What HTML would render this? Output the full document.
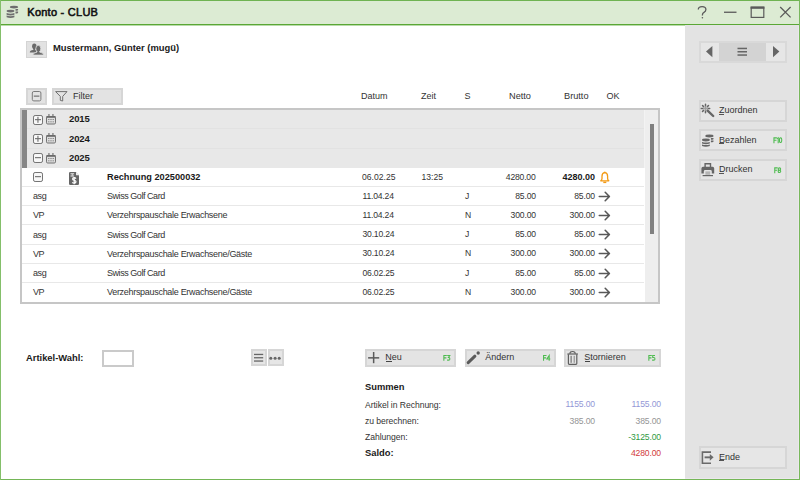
<!DOCTYPE html>
<html><head><meta charset="utf-8"><style>
html,body{margin:0;padding:0;}
body{width:800px;height:480px;position:relative;overflow:hidden;background:#fff;font-family:"Liberation Sans",sans-serif;}
.t{position:absolute;white-space:nowrap;line-height:normal;}
.r{position:absolute;}
svg.r{overflow:visible;}
</style></head><body>
<div class="r" style="left:0px;top:0px;width:800px;height:24px;background:#dcebd3;"></div>
<div class="r" style="left:0px;top:24px;width:800px;height:1px;background:#5aa735;"></div>
<div class="r" style="left:0px;top:25px;width:800px;height:1px;background:#b9dbaa;"></div>
<div class="r" style="left:0px;top:0px;width:800px;height:1px;background:#6fb352;"></div>
<div class="r" style="left:0px;top:479px;width:800px;height:1px;background:#74b657;"></div>
<div class="r" style="left:0px;top:0px;width:1px;height:480px;background:#84bf6a;"></div>
<div class="r" style="left:799px;top:0px;width:1px;height:480px;background:#78b85c;"></div>
<svg class="r" style="left:0px;top:0px" width="24" height="24" viewBox="0 0 24 24"><g fill="#6e6e6e">
<ellipse cx="14.0" cy="7.1" rx="4.1" ry="1.45"/>
<path d="M15.5 9.0 h2.6 v1.3 q-1 .5 -2.6 .5z"/>
<path d="M15.5 11.6 h2.6 v1.3 q-1 .5 -2.6 .5z"/>
<ellipse cx="10.5" cy="11.1" rx="3.95" ry="1.4"/>
<path d="M6.6 13.0 q3.9 1.3 7.8 0 v1.7 q-3.9 1.4 -7.8 0z"/>
<path d="M6.6 15.5 q3.9 1.3 7.8 0 v1.7 q-3.9 1.4 -7.8 0z"/>
</g></svg>
<div class="t" style="left:27.3px;top:6.15px;font-size:11px;font-weight:normal;color:#111;letter-spacing:0.25px;-webkit-text-stroke:0.55px #111;">Konto - CLUB</div>
<svg class="r" style="left:690px;top:0px" width="110" height="24" viewBox="0 0 110 24">
<path d="M698.3 9.6 q0 -3 3.8 -3 q3.8 0 3.8 3 q0 1.8 -1.9 2.7 q-1.6 .8 -1.6 2.6 v.6" transform="translate(-690 0)" fill="none" stroke="#5a5a5a" stroke-width="1.3"/>
<circle cx="12.4" cy="17.8" r=".8" fill="#5a5a5a"/>
<rect x="34" y="11.6" width="12.5" height="1.3" fill="#5a5a5a"/>
<rect x="61.2" y="7.2" width="12.6" height="10.2" fill="none" stroke="#5a5a5a" stroke-width="1.2"/>
<rect x="60.6" y="6.6" width="13.8" height="2.2" fill="#5a5a5a"/>
<path d="M90.2 7 L100.6 17.4 M100.6 7 L90.2 17.4" stroke="#5a5a5a" stroke-width="1.3"/>
</svg>
<div class="r" style="left:685px;top:25px;width:114px;height:454px;background:#e3e3e3;"></div>
<div class="r" style="left:798px;top:26px;width:1px;height:453px;background:#ebe8ec;"></div>
<div class="r" style="left:685px;top:478px;width:114px;height:1px;background:#ebe8ec;"></div>
<div class="r" style="left:699px;top:41px;width:88px;height:22px;background:#d9d9d9;"></div>
<div class="r" style="left:701px;top:43px;width:18px;height:18px;background:#e6e6e6;"></div>
<div class="r" style="left:719px;top:43px;width:47px;height:18px;background:#d3d3d3;"></div>
<div class="r" style="left:766px;top:43px;width:19px;height:18px;background:#e6e6e6;"></div>
<svg class="r" style="left:690px;top:30px" width="110" height="40" viewBox="0 0 110 40"><g fill="#666">
<path d="M22.4 16 L16 21.6 L22.4 27.2z"/>
<path d="M83 16 L89.4 21.6 L83 27.2z"/>
<rect x="47.5" y="17.7" width="9.5" height="1.5"/>
<rect x="47.5" y="21" width="9.5" height="1.5"/>
<rect x="47.5" y="24.3" width="9.5" height="1.5"/>
</g></svg>
<div class="r" style="left:699px;top:100px;width:88px;height:22px;background:#e6e6e6;border:2px solid #d6d6d6;box-sizing:border-box;"></div>
<div class="t" style="left:719px;top:105.16px;font-size:9px;font-weight:normal;color:#333;">Zuordnen</div>
<div class="r" style="left:719px;top:114px;width:5px;height:1px;background:#555;"></div>
<svg class="r" style="left:699px;top:100px" width="22" height="22" viewBox="0 0 22 22"><g stroke="#666" stroke-linecap="round">
<path d="M8.6 10.6 L14.2 16" stroke-width="2.4"/>
<path d="M6.5 4.3 v1.6 M6.5 11.1 v1.6 M2.3 8.5 h1.6 M9.1 8.5 h1.6 M3.5 5.5 l1.1 1.1 M3.5 11.5 l1.1 -1.1 M9.5 5.5 l-1.1 1.1" stroke-width="1.5"/>
</g><circle cx="6.5" cy="8.5" r="1.4" fill="#999"/></svg>
<div class="r" style="left:699px;top:129px;width:88px;height:22px;background:#e6e6e6;border:2px solid #d6d6d6;box-sizing:border-box;"></div>
<div class="t" style="left:719px;top:135.05px;font-size:9px;font-weight:normal;color:#333;">Bezahlen</div>
<div class="r" style="left:719px;top:143px;width:5px;height:1px;background:#555;"></div>
<svg class="r" style="left:0;top:0" width="1" height="1"><g fill="none" stroke="#4dbb4f" stroke-width="1.05"><path transform="translate(773.30 137.2)" d="M0.65 6 V0.65 H3.6 M0.65 3.1 H3.2"/><path transform="translate(776.90 137.2)" d="M0.2 1.5 L1.3 0.65 V6"/><path transform="translate(778.90 137.2)" d="M1.7 0.65 q1.1 0 1.1 1.5 v1.7 q0 1.5 -1.1 1.5 q-1.1 0 -1.1 -1.5 v-1.7 q0 -1.5 1.1 -1.5z"/></g></svg>
<svg class="r" style="left:699px;top:129px" width="22" height="22" viewBox="0 0 22 22"><g fill="#666">
<ellipse cx="10.4" cy="7.0" rx="4.1" ry="1.45"/>
<path d="M11.9 8.9 h2.6 v1.3 q-1 .5 -2.6 .5z"/>
<path d="M11.9 11.5 h2.6 v1.3 q-1 .5 -2.6 .5z"/>
<ellipse cx="6.9" cy="11.0" rx="3.95" ry="1.4"/>
<path d="M3 12.9 q3.9 1.3 7.8 0 v1.7 q-3.9 1.4 -7.8 0z"/>
<path d="M3 15.399999999999999 q3.9 1.3 7.8 0 v1.7 q-3.9 1.4 -7.8 0z"/>
</g></svg>
<div class="r" style="left:699px;top:159px;width:88px;height:22px;background:#e6e6e6;border:2px solid #d6d6d6;box-sizing:border-box;"></div>
<div class="t" style="left:719px;top:164.05px;font-size:9px;font-weight:normal;color:#333;">Drucken</div>
<div class="r" style="left:719px;top:173px;width:5px;height:1px;background:#555;"></div>
<svg class="r" style="left:0;top:0" width="1" height="1"><g fill="none" stroke="#4dbb4f" stroke-width="1.05"><path transform="translate(774.10 167.2)" d="M0.65 6 V0.65 H3.6 M0.65 3.1 H3.2"/><path transform="translate(777.70 167.2)" d="M1.75 0.65 q1.2 0 1.2 1.15 q0 1.15 -1.2 1.15 q-1.2 0 -1.2 -1.15 q0 -1.15 1.2 -1.15z M1.75 2.95 q1.3 0 1.3 1.2 q0 1.2 -1.3 1.2 q-1.3 0 -1.3 -1.2 q0 -1.2 1.3 -1.2z"/></g></svg>
<svg class="r" style="left:699px;top:159px" width="22" height="22" viewBox="0 0 22 22"><g transform="translate(0 -0.8)"><g fill="#666">
<path d="M5.4 4.8 h6.8 v4 h-1.4 v-2.6 h-4 v2.6 h-1.4z"/>
<path d="M4 8.6 h9.6 q1.6 0 1.6 1.6 v5.2 h-2.4 v-2.2 q0 -1.4 -1.4 -1.4 h-5.2 q-1.4 0 -1.4 1.4 v2.2 h-2.4 v-5.2 q0 -1.6 1.6 -1.6z"/>
<rect x="3.6" y="16.8" width="10.4" height="1.2"/>
</g><rect x="6.4" y="13.2" width="4.8" height="3.4" fill="#b5b5b5"/></g></svg>
<div class="r" style="left:699px;top:446px;width:88px;height:23px;background:#e6e6e6;border:2px solid #d6d6d6;box-sizing:border-box;"></div>
<div class="t" style="left:719px;top:451.96px;font-size:9px;font-weight:normal;color:#333;">Ende</div>
<div class="r" style="left:719px;top:460px;width:5px;height:1px;background:#555;"></div>
<svg class="r" style="left:699px;top:446px" width="22" height="22" viewBox="0 0 22 22"><g fill="#6a6a6a">
<path d="M2.6 5.3 h9.4 v1.6 h-7.8 v9.6 h7.8 v1.6 h-9.4z"/>
<rect x="5.6" y="10.4" width="5.5" height="1.9"/>
<path d="M10.8 8 L14.6 11.35 L10.8 14.7z"/>
</g></svg>
<div class="r" style="left:26px;top:41px;width:21px;height:17px;background:#e2e2e2;border:1.5px solid #d4d4d4;box-sizing:border-box;"></div>
<svg class="r" style="left:26px;top:41px" width="21" height="17" viewBox="0 0 21 17"><g fill="#6a6a6a">
<ellipse cx="8.3" cy="5.3" rx="2.2" ry="2.8"/>
<rect x="7.3" y="7" width="2" height="2.5"/>
<path d="M3.8 11.4 q0 -2.2 3.2 -2.4 h3.2 v2.4z"/>
</g>
<g fill="#6a6a6a" stroke="#e2e2e2" stroke-width="0.8">
<path d="M12.3 4.3 q-2.5 0 -2.5 3.4 q0 2 1.3 3 l-.1 .4 q-3.8 .5 -4.2 3 h11 q-.4 -2.5 -4.2 -3 l-.1 -.4 q1.3 -1 1.3 -3 q0 -3.4 -2.5 -3.4z"/>
</g></svg>
<div class="t" style="left:53px;top:42.49px;font-size:9.4px;font-weight:bold;color:#1a1a1a;">Mustermann, Günter (mugü)</div>
<div class="r" style="left:26px;top:88px;width:21px;height:17px;background:#e3e3e3;border:2px solid #d6d6d6;box-sizing:border-box;"></div>
<svg class="r" style="left:26px;top:88px" width="21" height="17" viewBox="0 0 21 17"><rect x="6.3" y="3.5" width="8.6" height="9.4" rx="1.5" fill="none" stroke="#7a7a7a" stroke-width="1"/><rect x="7.8" y="7.5" width="5.6" height="1.3" fill="#7a7a7a"/></svg>
<div class="r" style="left:52px;top:88px;width:71px;height:17px;background:#e3e3e3;border:2px solid #d6d6d6;box-sizing:border-box;"></div>
<svg class="r" style="left:52px;top:88px" width="20" height="17" viewBox="0 0 20 17"><path d="M3.6 3.6 h11.4 l-4.3 4.8 v4.6 l-2.4 -.6 v-4z" fill="none" stroke="#707070" stroke-width="1" stroke-linejoin="round"/></svg>
<div class="t" style="left:73px;top:90.56px;font-size:9px;font-weight:normal;color:#333;">Filter</div>
<div class="t" style="left:361px;top:91.16px;font-size:9px;font-weight:normal;color:#333;">Datum</div>
<div class="t" style="left:421px;top:91.16px;font-size:9px;font-weight:normal;color:#333;">Zeit</div>
<div class="t" style="left:464.5px;top:91.16px;font-size:9px;font-weight:normal;color:#333;">S</div>
<div class="t" style="left:509px;top:90.97px;font-size:9.2px;font-weight:normal;color:#333;">Netto</div>
<div class="t" style="left:564px;top:90.97px;font-size:9.2px;font-weight:normal;color:#333;">Brutto</div>
<div class="t" style="left:606.5px;top:91.16px;font-size:9px;font-weight:normal;color:#333;">OK</div>
<div class="r" style="left:20px;top:108px;width:640px;height:196px;background:#c6c6c6;"></div>
<div class="r" style="left:22px;top:110px;width:636px;height:192px;background:#ffffff;"></div>
<div class="r" style="left:22px;top:110px;width:622px;height:58px;background:#e8e8e8;"></div>
<div class="r" style="left:644px;top:110px;width:1px;height:58px;background:#f3f3f3;"></div>
<div class="r" style="left:645px;top:110px;width:13px;height:192px;background:#eeeeee;"></div>
<div class="r" style="left:650px;top:124px;width:4px;height:110px;background:#808080;"></div>
<div class="r" style="left:22px;top:110px;width:5px;height:58px;background:#868686;"></div>
<div class="r" style="left:27px;top:128px;width:617px;height:1px;background:#e2e2e2;"></div>
<div class="r" style="left:27px;top:148px;width:617px;height:1px;background:#e2e2e2;"></div>
<div class="r" style="left:22px;top:186px;width:622px;height:1px;background:#e8e8e8;"></div>
<div class="r" style="left:22px;top:205px;width:622px;height:1px;background:#e8e8e8;"></div>
<div class="r" style="left:22px;top:224px;width:622px;height:1px;background:#e8e8e8;"></div>
<div class="r" style="left:22px;top:244px;width:622px;height:1px;background:#e8e8e8;"></div>
<div class="r" style="left:22px;top:263px;width:622px;height:1px;background:#e8e8e8;"></div>
<div class="r" style="left:22px;top:282px;width:622px;height:1px;background:#e8e8e8;"></div>
<svg class="r" style="left:33px;top:115px" width="11" height="11" viewBox="0 0 11 11"><rect x="0.5" y="0.5" width="9" height="9" rx="1.6" fill="#f7f7f7" stroke="#747474" stroke-width="1"/><rect x="2" y="4.1" width="6" height="1.1" fill="#6e6e6e"/><rect x="4.4" y="1.8" width="1.1" height="6" fill="#6e6e6e"/></svg>
<svg class="r" style="left:46px;top:114px" width="11" height="11" viewBox="0 0 11 11"><rect x="0.5" y="2.5" width="9" height="7.5" rx="1.2" fill="#dedede" stroke="#707070" stroke-width="1"/>
<g fill="#6a6a6a">
<rect x="0.5" y="2" width="9" height="1.8"/>
<rect x="2.4" y="0" width="1.1" height="2.6"/><rect x="6.4" y="0" width="1.1" height="2.6"/>
</g>
<g fill="#7a7a7a"><rect x="2.2" y="5" width="1.2" height="1"/><rect x="4.4" y="5" width="1.2" height="1"/><rect x="6.6" y="5" width="1.2" height="1"/>
<rect x="2.2" y="7.3" width="1.2" height="1"/><rect x="4.4" y="7.3" width="1.2" height="1"/><rect x="6.6" y="7.3" width="1.2" height="1"/></g></svg>
<div class="t" style="left:69px;top:113.30px;font-size:9.5px;font-weight:bold;color:#1a1a1a;letter-spacing:-0.1px;">2015</div>
<svg class="r" style="left:33px;top:134px" width="11" height="11" viewBox="0 0 11 11"><rect x="0.5" y="0.5" width="9" height="9" rx="1.6" fill="#f7f7f7" stroke="#747474" stroke-width="1"/><rect x="2" y="4.1" width="6" height="1.1" fill="#6e6e6e"/><rect x="4.4" y="1.8" width="1.1" height="6" fill="#6e6e6e"/></svg>
<svg class="r" style="left:46px;top:133px" width="11" height="11" viewBox="0 0 11 11"><rect x="0.5" y="2.5" width="9" height="7.5" rx="1.2" fill="#dedede" stroke="#707070" stroke-width="1"/>
<g fill="#6a6a6a">
<rect x="0.5" y="2" width="9" height="1.8"/>
<rect x="2.4" y="0" width="1.1" height="2.6"/><rect x="6.4" y="0" width="1.1" height="2.6"/>
</g>
<g fill="#7a7a7a"><rect x="2.2" y="5" width="1.2" height="1"/><rect x="4.4" y="5" width="1.2" height="1"/><rect x="6.6" y="5" width="1.2" height="1"/>
<rect x="2.2" y="7.3" width="1.2" height="1"/><rect x="4.4" y="7.3" width="1.2" height="1"/><rect x="6.6" y="7.3" width="1.2" height="1"/></g></svg>
<div class="t" style="left:69px;top:132.50px;font-size:9.5px;font-weight:bold;color:#1a1a1a;letter-spacing:-0.1px;">2024</div>
<svg class="r" style="left:33px;top:153px" width="11" height="11" viewBox="0 0 11 11"><rect x="0.5" y="0.5" width="9" height="9" rx="1.6" fill="#f7f7f7" stroke="#747474" stroke-width="1"/><rect x="2" y="4.1" width="6" height="1.1" fill="#6e6e6e"/></svg>
<svg class="r" style="left:46px;top:153px" width="11" height="11" viewBox="0 0 11 11"><rect x="0.5" y="2.5" width="9" height="7.5" rx="1.2" fill="#dedede" stroke="#707070" stroke-width="1"/>
<g fill="#6a6a6a">
<rect x="0.5" y="2" width="9" height="1.8"/>
<rect x="2.4" y="0" width="1.1" height="2.6"/><rect x="6.4" y="0" width="1.1" height="2.6"/>
</g>
<g fill="#7a7a7a"><rect x="2.2" y="5" width="1.2" height="1"/><rect x="4.4" y="5" width="1.2" height="1"/><rect x="6.6" y="5" width="1.2" height="1"/>
<rect x="2.2" y="7.3" width="1.2" height="1"/><rect x="4.4" y="7.3" width="1.2" height="1"/><rect x="6.6" y="7.3" width="1.2" height="1"/></g></svg>
<div class="t" style="left:69px;top:151.70px;font-size:9.5px;font-weight:bold;color:#1a1a1a;letter-spacing:-0.1px;">2025</div>
<svg class="r" style="left:33px;top:172px" width="11" height="11" viewBox="0 0 11 11"><rect x="0.5" y="0.5" width="9" height="9" rx="1.6" fill="#f7f7f7" stroke="#747474" stroke-width="1"/><rect x="2" y="4.1" width="6" height="1.1" fill="#6e6e6e"/></svg>
<svg class="r" style="left:69px;top:172px" width="11" height="13" viewBox="0 0 11 13"><path d="M1.2 0 h5.6 l3.2 3.4 v8.4 q0 1.2 -1.2 1.2 h-7.6 q-1.2 0 -1.2 -1.2 v-10.6 q0 -1.2 1.2 -1.2z" fill="#666"/>
<path d="M7 0 L10 3.2 H7z" fill="#efefef"/>
<g fill="#f2f2f2"><rect x="1.5" y="1.3" width="3.6" height="1"/><rect x="2.8" y="2.3" width="1" height="1.2"/><rect x="1.5" y="3.5" width="3.6" height="1"/></g>
<path d="M7 6.6 q-.6 -.9 -1.8 -.9 q-1.6 0 -1.6 1.3 q0 1 1.6 1.3 q1.8 .3 1.8 1.5 q0 1.4 -1.8 1.4 q-1.2 0 -1.9 -.9 M5.2 4.9 v7.4" fill="none" stroke="#fff" stroke-width="1.2"/></svg>
<div class="t" style="left:107px;top:171.97px;font-size:9.2px;font-weight:bold;color:#1a1a1a;">Rechnung 202500032</div>
<div class="t" style="left:362px;top:172.32px;font-size:8.6px;font-weight:normal;color:#333;">06.02.25</div>
<div class="t" style="left:421.5px;top:172.32px;font-size:8.6px;font-weight:normal;color:#333;">13:25</div>
<div class="t" style="right:264.5px;top:172.32px;font-size:8.6px;font-weight:normal;color:#333;letter-spacing:-0.2px;">4280.00</div>
<div class="t" style="right:205px;top:172.35px;font-size:9px;font-weight:bold;color:#1a1a1a;">4280.00</div>
<svg class="r" style="left:600px;top:171px" width="11" height="13" viewBox="0 0 11 13"><g fill="none" stroke="#f39a14" stroke-width="1.3" stroke-linejoin="round">
<path d="M4.8 1.6 q-2.8 .2 -2.8 3.6 v2.2 q0 1.4 -1.2 2.4 h8 q-1.2 -1 -1.2 -2.4 v-2.2 q0 -3.4 -2.8 -3.6z"/>
</g><rect x="4.2" y="0.6" width="1.2" height="1.2" fill="#f39a14"/><rect x="3.3" y="10.6" width="3" height="1.5" fill="#f39a14"/></svg>
<div class="t" style="left:33px;top:191.16px;font-size:9px;font-weight:normal;color:#333;letter-spacing:-0.4px;">asg</div>
<div class="t" style="left:107px;top:191.16px;font-size:9px;font-weight:normal;color:#333;letter-spacing:-0.45px;">Swiss Golf Card</div>
<div class="t" style="left:362.5px;top:190.82px;font-size:8.6px;font-weight:normal;color:#333;letter-spacing:-0.2px;">11.04.24</div>
<div class="t" style="left:465px;top:190.82px;font-size:8.6px;font-weight:normal;color:#333;">J</div>
<div class="t" style="right:264px;top:190.82px;font-size:8.6px;font-weight:normal;color:#333;letter-spacing:-0.15px;">85.00</div>
<div class="t" style="right:205px;top:190.82px;font-size:8.6px;font-weight:normal;color:#333;letter-spacing:-0.15px;">85.00</div>
<svg class="r" style="left:598px;top:191px" width="14" height="11" viewBox="0 0 14 11"><path d="M1.3 5.5 H11.3 M7.2 1.3 L11.4 5.5 L7.2 9.7" fill="none" stroke="#585858" stroke-width="1.6" stroke-linecap="round" stroke-linejoin="round"/></svg>
<div class="t" style="left:33px;top:210.35px;font-size:9px;font-weight:normal;color:#333;letter-spacing:-0.4px;">VP</div>
<div class="t" style="left:107px;top:210.35px;font-size:9px;font-weight:normal;color:#333;letter-spacing:-0.3px;">Verzehrspauschale Erwachsene</div>
<div class="t" style="left:362.5px;top:210.02px;font-size:8.6px;font-weight:normal;color:#333;letter-spacing:-0.2px;">11.04.24</div>
<div class="t" style="left:465px;top:210.02px;font-size:8.6px;font-weight:normal;color:#333;">N</div>
<div class="t" style="right:264px;top:210.02px;font-size:8.6px;font-weight:normal;color:#333;letter-spacing:-0.15px;">300.00</div>
<div class="t" style="right:205px;top:210.02px;font-size:8.6px;font-weight:normal;color:#333;letter-spacing:-0.15px;">300.00</div>
<svg class="r" style="left:598px;top:210px" width="14" height="11" viewBox="0 0 14 11"><path d="M1.3 5.5 H11.3 M7.2 1.3 L11.4 5.5 L7.2 9.7" fill="none" stroke="#585858" stroke-width="1.6" stroke-linecap="round" stroke-linejoin="round"/></svg>
<div class="t" style="left:33px;top:229.56px;font-size:9px;font-weight:normal;color:#333;letter-spacing:-0.4px;">asg</div>
<div class="t" style="left:107px;top:229.56px;font-size:9px;font-weight:normal;color:#333;letter-spacing:-0.45px;">Swiss Golf Card</div>
<div class="t" style="left:362.5px;top:229.22px;font-size:8.6px;font-weight:normal;color:#333;letter-spacing:-0.2px;">30.10.24</div>
<div class="t" style="left:465px;top:229.22px;font-size:8.6px;font-weight:normal;color:#333;">J</div>
<div class="t" style="right:264px;top:229.22px;font-size:8.6px;font-weight:normal;color:#333;letter-spacing:-0.15px;">85.00</div>
<div class="t" style="right:205px;top:229.22px;font-size:8.6px;font-weight:normal;color:#333;letter-spacing:-0.15px;">85.00</div>
<svg class="r" style="left:598px;top:229px" width="14" height="11" viewBox="0 0 14 11"><path d="M1.3 5.5 H11.3 M7.2 1.3 L11.4 5.5 L7.2 9.7" fill="none" stroke="#585858" stroke-width="1.6" stroke-linecap="round" stroke-linejoin="round"/></svg>
<div class="t" style="left:33px;top:248.75px;font-size:9px;font-weight:normal;color:#333;letter-spacing:-0.4px;">VP</div>
<div class="t" style="left:107px;top:248.75px;font-size:9px;font-weight:normal;color:#333;letter-spacing:-0.3px;">Verzehrspauschale Erwachsene/Gäste</div>
<div class="t" style="left:362.5px;top:248.42px;font-size:8.6px;font-weight:normal;color:#333;letter-spacing:-0.2px;">30.10.24</div>
<div class="t" style="left:465px;top:248.42px;font-size:8.6px;font-weight:normal;color:#333;">N</div>
<div class="t" style="right:264px;top:248.42px;font-size:8.6px;font-weight:normal;color:#333;letter-spacing:-0.15px;">300.00</div>
<div class="t" style="right:205px;top:248.42px;font-size:8.6px;font-weight:normal;color:#333;letter-spacing:-0.15px;">300.00</div>
<svg class="r" style="left:598px;top:248px" width="14" height="11" viewBox="0 0 14 11"><path d="M1.3 5.5 H11.3 M7.2 1.3 L11.4 5.5 L7.2 9.7" fill="none" stroke="#585858" stroke-width="1.6" stroke-linecap="round" stroke-linejoin="round"/></svg>
<div class="t" style="left:33px;top:267.96px;font-size:9px;font-weight:normal;color:#333;letter-spacing:-0.4px;">asg</div>
<div class="t" style="left:107px;top:267.96px;font-size:9px;font-weight:normal;color:#333;letter-spacing:-0.45px;">Swiss Golf Card</div>
<div class="t" style="left:362.5px;top:267.62px;font-size:8.6px;font-weight:normal;color:#333;letter-spacing:-0.2px;">06.02.25</div>
<div class="t" style="left:465px;top:267.62px;font-size:8.6px;font-weight:normal;color:#333;">J</div>
<div class="t" style="right:264px;top:267.62px;font-size:8.6px;font-weight:normal;color:#333;letter-spacing:-0.15px;">85.00</div>
<div class="t" style="right:205px;top:267.62px;font-size:8.6px;font-weight:normal;color:#333;letter-spacing:-0.15px;">85.00</div>
<svg class="r" style="left:598px;top:268px" width="14" height="11" viewBox="0 0 14 11"><path d="M1.3 5.5 H11.3 M7.2 1.3 L11.4 5.5 L7.2 9.7" fill="none" stroke="#585858" stroke-width="1.6" stroke-linecap="round" stroke-linejoin="round"/></svg>
<div class="t" style="left:33px;top:287.16px;font-size:9px;font-weight:normal;color:#333;letter-spacing:-0.4px;">VP</div>
<div class="t" style="left:107px;top:287.16px;font-size:9px;font-weight:normal;color:#333;letter-spacing:-0.3px;">Verzehrspauschale Erwachsene/Gäste</div>
<div class="t" style="left:362.5px;top:286.82px;font-size:8.6px;font-weight:normal;color:#333;letter-spacing:-0.2px;">06.02.25</div>
<div class="t" style="left:465px;top:286.82px;font-size:8.6px;font-weight:normal;color:#333;">N</div>
<div class="t" style="right:264px;top:286.82px;font-size:8.6px;font-weight:normal;color:#333;letter-spacing:-0.15px;">300.00</div>
<div class="t" style="right:205px;top:286.82px;font-size:8.6px;font-weight:normal;color:#333;letter-spacing:-0.15px;">300.00</div>
<svg class="r" style="left:598px;top:287px" width="14" height="11" viewBox="0 0 14 11"><path d="M1.3 5.5 H11.3 M7.2 1.3 L11.4 5.5 L7.2 9.7" fill="none" stroke="#585858" stroke-width="1.6" stroke-linecap="round" stroke-linejoin="round"/></svg>
<div class="t" style="left:26px;top:352.19px;font-size:9.4px;font-weight:bold;color:#1a1a1a;">Artikel-Wahl:</div>
<div class="r" style="left:102px;top:350px;width:32px;height:17px;background:#ffffff;border:2px solid #cacaca;box-sizing:border-box;"></div>
<div class="r" style="left:251px;top:349px;width:16px;height:17px;background:#e6e6e6;border:2px solid #d6d6d6;box-sizing:border-box;"></div>
<div class="r" style="left:268px;top:349px;width:16px;height:17px;background:#e6e6e6;border:2px solid #d6d6d6;box-sizing:border-box;"></div>
<svg class="r" style="left:251px;top:349px" width="33" height="17" viewBox="0 0 33 17"><g fill="#666"><rect x="3" y="4.8" width="9.2" height="1.3"/><rect x="3" y="8.1" width="9.2" height="1.3"/><rect x="3" y="11.4" width="9.2" height="1.3"/>
<circle cx="19.8" cy="9.3" r="1.5"/><circle cx="24.1" cy="9.3" r="1.5"/><circle cx="28.2" cy="9.3" r="1.5"/></g></svg>
<div class="r" style="left:365px;top:349px;width:91px;height:18px;background:#e4e4e4;border:2px solid #d6d6d6;box-sizing:border-box;"></div>
<div class="t" style="left:385.3px;top:352.16px;font-size:9px;font-weight:normal;color:#333;">Neu</div>
<svg class="r" style="left:0;top:0" width="1" height="1"><g fill="none" stroke="#4dbb4f" stroke-width="1.05"><path transform="translate(443.20 354.8)" d="M0.65 6 V0.65 H3.6 M0.65 3.1 H3.2"/><path transform="translate(446.80 354.8)" d="M0.4 0.65 H3 L1.6 2.6 Q3.1 2.6 3.1 4.2 Q3.1 5.35 1.7 5.35 H0.3"/></g></svg>
<svg class="r" style="left:365px;top:349px" width="20" height="18" viewBox="0 0 20 18"><g fill="#5a5a5a"><rect x="3.1" y="8.1" width="11.1" height="1.5"/><rect x="7.9" y="3" width="1.5" height="11.2"/></g></svg>
<div class="r" style="left:385.5px;top:361px;width:6px;height:1px;background:#444;"></div>
<div class="r" style="left:465px;top:349px;width:91px;height:18px;background:#e4e4e4;border:2px solid #d6d6d6;box-sizing:border-box;"></div>
<div class="t" style="left:485.3px;top:352.16px;font-size:9px;font-weight:normal;color:#333;">Ändern</div>
<svg class="r" style="left:0;top:0" width="1" height="1"><g fill="none" stroke="#4dbb4f" stroke-width="1.05"><path transform="translate(542.90 354.8)" d="M0.65 6 V0.65 H3.6 M0.65 3.1 H3.2"/><path transform="translate(546.50 354.8)" d="M2.7 6 V0.6 L0.3 4.3 H3.8"/></g></svg>
<svg class="r" style="left:465px;top:349px" width="20" height="18" viewBox="0 0 20 18"><path d="M3.2 13.6 L9.9 7.2" stroke="#5a5a5a" stroke-width="3" stroke-linecap="round"/><circle cx="13.2" cy="4" r="1.7" fill="#5a5a5a"/></svg>
<div class="r" style="left:564px;top:349px;width:97px;height:18px;background:#e4e4e4;border:2px solid #d6d6d6;box-sizing:border-box;"></div>
<div class="t" style="left:584.3px;top:352.16px;font-size:9px;font-weight:normal;color:#333;">Stornieren</div>
<svg class="r" style="left:0;top:0" width="1" height="1"><g fill="none" stroke="#4dbb4f" stroke-width="1.05"><path transform="translate(648.20 354.8)" d="M0.65 6 V0.65 H3.6 M0.65 3.1 H3.2"/><path transform="translate(651.80 354.8)" d="M3.2 0.65 H0.9 V2.8 H1.9 Q3.2 2.8 3.2 4.1 Q3.2 5.35 1.9 5.35 H0.3"/></g></svg>
<svg class="r" style="left:564px;top:349px" width="20" height="18" viewBox="0 0 20 18"><g transform="translate(-0.6 0)"><g fill="none" stroke="#5f5f5f" stroke-width="1.2">
<path d="M4 5 h10.5"/><path d="M6.5 4.8 q0 -2.3 2.7 -2.3 q2.7 0 2.7 2.3"/>
<path d="M5 5.2 v9.3 q0 .8 .8 .8 h6.8 q.8 0 .8 -.8 v-9.3"/>
</g><rect x="7.2" y="6.8" width="1" height="7" fill="#5f5f5f"/><rect x="10.2" y="6.8" width="1.3" height="7" fill="#999"/></g></svg>
<div class="r" style="left:584.5px;top:361px;width:5px;height:1px;background:#444;"></div>
<div class="t" style="left:365px;top:381.54px;font-size:9.35px;font-weight:bold;color:#1a1a1a;">Summen</div>
<div class="t" style="left:365px;top:399.72px;font-size:8.6px;font-weight:normal;color:#333;letter-spacing:-0.05px;">Artikel in Rechnung:</div>
<div class="t" style="left:365px;top:415.82px;font-size:8.6px;font-weight:normal;color:#333;letter-spacing:-0.05px;">zu berechnen:</div>
<div class="t" style="left:365px;top:432.02px;font-size:8.6px;font-weight:normal;color:#333;letter-spacing:-0.05px;">Zahlungen:</div>
<div class="t" style="left:365px;top:447.64px;font-size:9.35px;font-weight:bold;color:#1a1a1a;">Saldo:</div>
<div class="t" style="right:205px;top:398.72px;font-size:8.6px;font-weight:normal;color:#9397d6;letter-spacing:-0.15px;">1155.00</div>
<div class="t" style="right:139px;top:398.72px;font-size:8.6px;font-weight:normal;color:#9397d6;letter-spacing:-0.15px;">1155.00</div>
<div class="t" style="right:205px;top:415.72px;font-size:8.6px;font-weight:normal;color:#959595;letter-spacing:-0.15px;">385.00</div>
<div class="t" style="right:139px;top:415.72px;font-size:8.6px;font-weight:normal;color:#959595;letter-spacing:-0.15px;">385.00</div>
<div class="t" style="right:139px;top:431.92px;font-size:8.6px;font-weight:normal;color:#2f9a3f;letter-spacing:-0.15px;">-3125.00</div>
<div class="t" style="right:139px;top:447.72px;font-size:8.6px;font-weight:normal;color:#d23b3b;letter-spacing:-0.15px;">4280.00</div>
</body></html>
